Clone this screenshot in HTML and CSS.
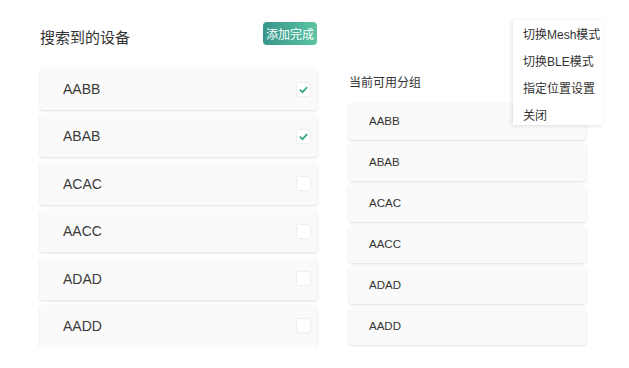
FILE: index.html
```html
<!DOCTYPE html>
<html lang="zh">
<head>
    <meta charset="UTF-8">
    <meta name="viewport" content="width=device-width, initial-scale=1.0">
    <title>设备分组</title>
    <link rel="stylesheet" href="styles.css">
</head>
<body>
    <main class="page">
        <section class="devices">
            <div class="devices-head">
                <h2 class="title">搜索到的设备</h2>
                <button class="done-btn">添加完成</button>
            </div>
            <ul class="device-list">
                <li class="device-card"><span>AABB</span><span class="check checked"><svg viewBox="0 0 13 13"><polyline points="2.8,6.6 5.5,9.2 10.2,4.2"/></svg></span></li>
                <li class="device-card"><span>ABAB</span><span class="check checked"><svg viewBox="0 0 13 13"><polyline points="2.8,6.6 5.5,9.2 10.2,4.2"/></svg></span></li>
                <li class="device-card"><span>ACAC</span><span class="check"></span></li>
                <li class="device-card"><span>AACC</span><span class="check"></span></li>
                <li class="device-card"><span>ADAD</span><span class="check"></span></li>
                <li class="device-card"><span>AADD</span><span class="check"></span></li>
            </ul>
        </section>

        <section class="groups">
            <h3 class="sub-title">当前可用分组</h3>
            <ul class="group-list">
                <li class="group-card">AABB</li>
                <li class="group-card">ABAB</li>
                <li class="group-card">ACAC</li>
                <li class="group-card">AACC</li>
                <li class="group-card">ADAD</li>
                <li class="group-card">AADD</li>
            </ul>
        </section>
    </main>

    <div class="menu">
        <a href="#">切换Mesh模式</a>
        <a href="#">切换BLE模式</a>
        <a href="#">指定位置设置</a>
        <a href="#">关闭</a>
    </div>
</body>
</html>
```

FILE: styles.css
```css
body {
    margin: 0;
    padding: 0;
    background-color: #ffffff;
    color: #333333;
    font-family: "Liberation Sans", "Noto Sans CJK SC", sans-serif;
}

ul {
    list-style: none;
    margin: 0;
    padding: 0;
}

.page {
    display: flex;
    gap: 32px;
    padding: 22px 0 0 40px;
}

/* left column */
.devices {
    width: 277px;
}

.devices-head {
    display: flex;
    justify-content: space-between;
    align-items: flex-start;
    height: 46px;
}

.title {
    margin: 6px 0 0;
    font-size: 15px;
    font-weight: normal;
    line-height: 20px;
    color: #333333;
}

.done-btn {
    height: 23px;
    width: 54px;
    padding: 0;
    border: none;
    border-radius: 4px;
    background: linear-gradient(90deg, #36968a, #5cc4a3);
    color: #ffffff;
    font-family: inherit;
    font-size: 12px;
    white-space: nowrap;
}

.device-list {
    display: flex;
    flex-direction: column;
    gap: 5.4px;
}

.device-card {
    display: flex;
    justify-content: space-between;
    align-items: center;
    height: 42px;
    padding: 0 7px 0 23px;
    background-color: #fafafa;
    border-radius: 3px;
    box-shadow: 0 1px 3px rgba(0, 0, 0, 0.13);
    font-size: 14px;
    color: #3a3a3a;
    box-sizing: border-box;
}

.check {
    width: 13px;
    height: 13px;
    background-color: #ffffff;
    border-radius: 2px;
    box-shadow: 0 0 2px rgba(0, 0, 0, 0.18);
}

.check svg {
    width: 13px;
    height: 13px;
    display: block;
}

.check polyline {
    fill: none;
    stroke: #3aab91;
    stroke-width: 1.8;
}

/* right column */
.groups {
    width: 237px;
    padding-top: 53px;
}

.sub-title {
    margin: 0 0 12px;
    font-size: 12px;
    font-weight: normal;
    line-height: 16px;
    color: #333333;
}

.group-list {
    display: flex;
    flex-direction: column;
    gap: 4.5px;
}

.group-card {
    height: 36.5px;
    line-height: 36.5px;
    padding-left: 20px;
    background-color: #fafafa;
    border-radius: 3px;
    box-shadow: 0 1px 3px rgba(0, 0, 0, 0.13);
    font-size: 11.5px;
}

/* popup menu */
.menu {
    position: absolute;
    top: 20px;
    left: 513px;
    width: 90px;
    height: 105px;
    padding-top: 6px;
    box-sizing: border-box;
    background-color: #ffffff;
    box-shadow: -1px 1px 4px rgba(0, 0, 0, 0.12);
    display: flex;
    flex-direction: column;
}

.menu a {
    display: block;
    padding-left: 10px;
    height: 27px;
    flex-shrink: 0;
    line-height: 18px;
    font-size: 12px;
    color: #333333;
    text-decoration: none;
}
```
